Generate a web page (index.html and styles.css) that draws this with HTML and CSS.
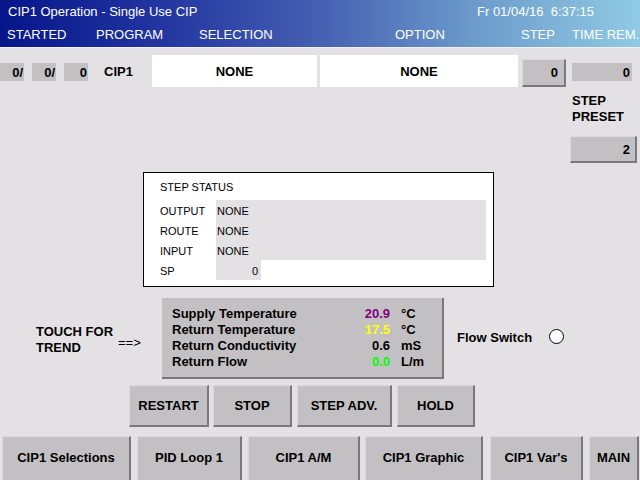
FILE: index.html
```html
<!DOCTYPE html>
<html>
<head>
<meta charset="utf-8">
<title>CIP1 Operation</title>
<link rel="stylesheet" href="styles.css">
</head>
<body>
<div class="screen">
  <header class="titlebar">
    <div class="tb-row">
      <span class="tb-title">CIP1 Operation - Single Use CIP</span>
      <span class="tb-date">Fr 01/04/16&nbsp;&nbsp;6:37:15</span>
    </div>
    <div class="tb-row tb-cols">
      <span class="col-started">STARTED</span>
      <span class="col-program">PROGRAM</span>
      <span class="col-selection">SELECTION</span>
      <span class="col-option">OPTION</span>
      <span class="col-step">STEP</span>
      <span class="col-time">TIME REM.</span>
    </div>
  </header>

  <section class="top">
    <div class="counters">
      <div class="cnt">0/</div>
      <div class="cnt">0/</div>
      <div class="cnt">0</div>
    </div>
    <div class="unit-name">CIP1</div>
    <div class="field field-program">NONE</div>
    <div class="field field-selection">NONE</div>
    <div class="btn btn-step">0</div>
    <div class="step-col">
      <div class="cnt cnt-time">0</div>
      <div class="preset-label">STEP<br>PRESET</div>
      <div class="btn btn-preset">2</div>
    </div>
  </section>

  <section class="status">
    <div class="status-title">STEP STATUS</div>
    <div class="status-grid">
      <div class="s-label">OUTPUT</div><div class="s-val s-wide">NONE</div>
      <div class="s-label">ROUTE</div><div class="s-val s-wide">NONE</div>
      <div class="s-label">INPUT</div><div class="s-val s-wide">NONE</div>
      <div class="s-label">SP</div><div class="s-val s-num">0</div>
    </div>
  </section>

  <section class="trend">
    <div class="touch">TOUCH FOR<br>TREND</div>
    <div class="arrow">==&gt;</div>
    <div class="panel">
      <div class="p-label">Supply Temperature</div><div class="p-val v-purple">20.9</div><div class="p-unit">°C</div>
      <div class="p-label">Return Temperature</div><div class="p-val v-yellow">17.5</div><div class="p-unit">°C</div>
      <div class="p-label">Return Conductivity</div><div class="p-val">0.6</div><div class="p-unit">mS</div>
      <div class="p-label">Return Flow</div><div class="p-val v-green">0.0</div><div class="p-unit">L/m</div>
    </div>
    <div class="flow">Flow Switch</div>
    <div class="lamp"></div>
  </section>

  <nav class="actions">
    <div class="btn act act-restart">RESTART</div>
    <div class="btn act act-stop">STOP</div>
    <div class="btn act act-adv">STEP ADV.</div>
    <div class="btn act act-hold">HOLD</div>
  </nav>

  <nav class="screens">
    <div class="btn scr scr-sel">CIP1 Selections</div>
    <div class="btn scr scr-pid">PID Loop 1</div>
    <div class="btn scr scr-am">CIP1 A/M</div>
    <div class="btn scr scr-graphic">CIP1 Graphic</div>
    <div class="btn scr scr-vars">CIP1 Var's</div>
    <div class="btn scr scr-main">MAIN</div>
  </nav>
</div>
</body>
</html>
```

FILE: styles.css
```css
html, body {
  margin: 0;
  padding: 0;
}
body {
  background: #e4e1e4;
  font-family: "Liberation Sans", Arial, sans-serif;
  font-size: 13px;
  color: #000;
}
.screen {
  width: 640px;
  height: 480px;
  overflow: hidden;
  position: relative;
}

/* Title bar */
.titlebar {
  height: 48px;
  box-sizing: border-box;
  padding-top: 4px;
  background: linear-gradient(to right, #06168a 0%, #2235a0 25%, #4660b2 50%, #6d9dcc 75%, #90cae4 100%);
  border-bottom: 1px solid #f2f2f6;
  color: #fff;
  font-size: 13px;
  line-height: 16px;
}
.tb-row {
  display: flex;
  height: 16px;
  white-space: nowrap;
}
.tb-row + .tb-row {
  margin-top: 7px;
}
.tb-title {
  margin-left: 8px;
  width: 469px;
}
.tb-cols {
  padding-left: 7px;
}
.col-started { width: 89px; }
.col-program { width: 103px; }
.col-selection { width: 196px; }
.col-option { width: 126px; }
.col-step { width: 51px; }

/* Top row */
.top {
  display: flex;
  align-items: flex-start;
  margin-top: 7px;
  height: 109px;
}
.counters {
  display: flex;
  gap: 8px;
  margin-top: 8px;
}
.cnt {
  width: 24px;
  height: 18px;
  box-sizing: border-box;
  background: #c3c0c3;
  font-weight: bold;
  line-height: 19px;
  text-align: right;
  padding-right: 1px;
}
.unit-name {
  margin-left: 16px;
  width: 48px;
  height: 32px;
  box-sizing: border-box;
  padding-top: 2px;
  display: flex;
  align-items: center;
  font-weight: bold;
  line-height: 16px;
}
.field {
  height: 32px;
  background: #fff;
  font-weight: bold;
  line-height: 34px;
  text-align: center;
}
.field-program { width: 165px; }
.field-selection { width: 198px; margin-left: 3px; }

.btn {
  box-sizing: border-box;
  background: #c3c0c3;
  border-top: 1px solid #dcd9dc;
  border-left: 1px solid #dcd9dc;
  border-right: 2px solid #7a787a;
  border-bottom: 2px solid #7a787a;
  font-weight: bold;
}
.btn-step {
  margin-left: 4px;
  margin-top: 4px;
  width: 44px;
  height: 28px;
  line-height: 26px;
  text-align: right;
  padding-right: 6px;
}
.step-col {
  margin-left: 6px;
  margin-top: 8px;
  width: 60px;
  display: flex;
  flex-direction: column;
}
.cnt-time {
  width: 60px;
  padding-right: 2px;
}
.preset-label {
  margin-top: 12px;
  font-weight: bold;
  line-height: 16px;
}
.btn-preset {
  margin-top: 11px;
  margin-left: -2px;
  width: 67px;
  height: 27px;
  line-height: 25px;
  text-align: right;
  padding-right: 5px;
}

/* Step status */
.status {
  margin: 8px 0 0 143px;
  width: 351px;
  height: 115px;
  box-sizing: border-box;
  border: 1px solid #000;
  background: #fff;
  padding: 7px 0 0 16px;
  font-size: 11px;
}
.status-title {
  line-height: 14px;
  height: 14px;
  margin-bottom: 6px;
}
.status-grid {
  display: grid;
  grid-template-columns: 56px 270px;
  grid-auto-rows: 20px;
}
.s-label, .s-val {
  box-sizing: border-box;
  height: 20px;
  padding-top: 2px;
  line-height: 18px;
}
.s-val {
  background: #e4e1e4;
  padding-left: 1px;
}
.s-num {
  width: 45px;
  text-align: right;
  padding-right: 3px;
}

/* Trend row */
.trend {
  display: flex;
  align-items: flex-start;
  margin-top: 11px;
  height: 81px;
  font-weight: bold;
  line-height: 16px;
}
.touch {
  margin-left: 36px;
  margin-top: 26px;
  width: 82px;
}
.arrow {
  margin-top: 37px;
  width: 44px;
  font-weight: normal;
}
.panel {
  width: 282px;
  height: 81px;
  box-sizing: border-box;
  background: #c3c0c3;
  border-right: 2px solid #7a787a;
  border-bottom: 2px solid #7a787a;
  padding: 8px 0 0 10px;
  display: grid;
  grid-template-columns: 180px 38px auto;
  grid-auto-rows: 16px;
}
.p-val {
  text-align: right;
}
.p-unit {
  padding-left: 11px;
}
.v-purple { color: #800080; }
.v-yellow { color: #ffff00; }
.v-green { color: #00ff00; }
.flow {
  margin-left: 13px;
  margin-top: 32px;
}
.lamp {
  margin-left: 17px;
  margin-top: 31px;
  width: 15px;
  height: 15px;
  box-sizing: border-box;
  border: 1px solid #000;
  border-radius: 50%;
  background: #fff;
}

/* Action buttons */
.actions {
  display: flex;
  margin: 6px 0 0 129px;
  height: 42px;
}
.act {
  height: 42px;
  line-height: 40px;
  text-align: center;
}
.act-restart { width: 80px; }
.act-stop { width: 79px; margin-left: 4px; }
.act-adv { width: 95px; margin-left: 5px; }
.act-hold { width: 78px; margin-left: 5px; }

/* Screen buttons */
.screens {
  display: flex;
  margin: 9px 0 0 2px;
  height: 44px;
}
.scr {
  height: 46px;
  line-height: 42px;
  text-align: center;
}
.scr-sel { width: 129px; }
.scr-pid { width: 105px; margin-left: 6px; }
.scr-am { width: 112px; margin-left: 6px; }
.scr-graphic { width: 118px; margin-left: 5px; }
.scr-vars { width: 93px; margin-left: 7px; }
.scr-main { width: 50px; margin-left: 6px; }
```
